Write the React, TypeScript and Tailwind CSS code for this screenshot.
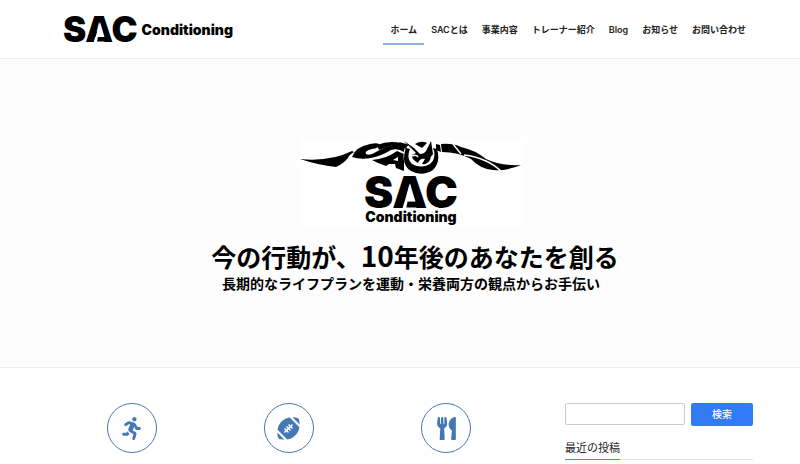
import { FaRunning, FaFootballBall, FaUtensils } from "react-icons/fa";

const links = ["ホーム", "SACとは", "事業内容", "トレーナー紹介", "Blog", "お知らせ", "お問い合わせ"];
const services = [
  { name: "トレーニング", Icon: FaRunning },
  { name: "スポーツ", Icon: FaFootballBall },
  { name: "栄養", Icon: FaUtensils },
];

function Wings() {
  return (
    <svg viewBox="300 137 222 38" className="h-[38px] w-[222px]" aria-hidden="true">
      <path d="M300 158 Q330 161 352 150 L354 151 Q349 154 348 157 Q343 163 336 166 Q318 164 300 158Z" />
      <path d="M352 156 Q355 146 370 143 Q379 141 380 144 Q379 147 372 148 Q364 150 366 153 Q370 155 376 151 Q386 145 397 143 L405 145 L404 151 Q398 147 391 149 Q381 155 371 157 Q360 159 352 156Z" />
      <path d="M377 144 Q389 139 401 142 L406 146 Q396 142 387 146 L379 149Z" />
      <path d="M372 159 Q386 158 397 150 L404 153 L404 170 L396 167 L395 163 L389 163 L386 165 L378 162Z" />
      <path d="M393 159 L398 156 L398 160Z" fill="white" />
      <path d="M399 141 L410 144 L418 152 L407 150Z" />
      <circle cx="421" cy="156" r="17.5" fill="white" />
      <path d="M406 147 Q400 163 411 170 Q422 176 433 169 Q441 161 437 148 L433 147 Q437 157 430 163 Q421 168 412 163 Q406 157 410 148Z" />
      <path d="M404 140 L414 147 L420 153 Q424 153 426 150 L431 140 L433 153 Q430 156 430 159 Q427 164 422 163 L425 158 Q420 157 418 162 Q411 158 412 154 L416 152Z" />
      <path d="M412 155 Q416 153 418 156 M421 147 Q424 144 427 144" fill="none" stroke="white" strokeWidth="1.4" />
      <path d="M415 143 Q421 139 427 142 L422 147Z" />
      <path d="M436 143 L440 144 L441 151 L436 149Z" />
      <path d="M441 143 Q453 142 461 146 Q475 149 486 158 Q500 165 521 164 Q507 170 493 169 Q480 168 471 158 Q458 151 442 151Z" />
      <path d="M453 143 L461 153 M464 154 Q475 155 486 160 Q493 163 501 170" fill="none" stroke="white" strokeWidth="1.4" />
    </svg>
  );
}

function Notch({ className }: { className: string }) {
  return (
    <svg viewBox="0 0 26 26" className={"absolute " + className} aria-hidden="true">
      <path d="M13 6 L17.5 21 L11 21 L10 26 L7 26Z" fill="white" />
      <path d="M11 21 H19 V25.5 H10Z" />
    </svg>
  );
}

export default function App() {
  return (
    <div className="min-h-screen bg-white font-['Inter','Noto_Sans_CJK_JP',sans-serif] text-[#222]">
      <header className="border-b border-[#eee] px-[47px]">
        <div className="flex h-[58px] items-center justify-between">
          <a href="#home" className="flex items-center gap-1 pl-4 text-black">
            <span className="relative text-[35px] leading-[56px] font-black">
              SAC
              <Notch className="top-[15px] left-6 size-[26px]" />
            </span>
            <span className="pt-[2px] text-[14px] leading-5 font-black">Conditioning</span>
          </a>
          <nav className="flex">
            {links.map((link, i) => (
              <a key={link} href={"#" + i} className={"px-[7px] pt-[9px] pb-[5px] text-[9px] leading-4 font-semibold whitespace-nowrap border-b-2 " + (i === 0 ? "border-[#8fb1d9]" : "border-transparent")}>
                {link}
              </a>
            ))}
          </nav>
        </div>
      </header>
      <section className="flex flex-col items-center border-b border-[#eee] bg-[#fdfdfd] pt-[79px] pb-[75px] text-black">
        <div className="ml-[22px] flex w-[222px] flex-col items-center bg-white">
          <Wings />
          <div className="relative text-[44px] leading-8 font-black">
            SAC
            <Notch className="top-0 left-[30px] size-8" />
          </div>
          <div className="text-[14px] leading-[18px] font-black">Conditioning</div>
        </div>
        <h1 className="mt-3 ml-[30px] font-['Noto_Sans_CJK_JP',sans-serif] text-[25px] leading-9 font-bold">
          今の行動が、<span className="text-[28px] leading-none">10</span>年後のあなたを創る
        </h1>
        <p className="ml-[22px] font-['Noto_Sans_CJK_JP',sans-serif] text-[14px] leading-[18px] font-bold">長期的なライフプランを運動・栄養両方の観点からお手伝い</p>
      </section>
      <main className="flex justify-between gap-10 px-[47px] pt-[35px]">
        <div className="grid flex-1 grid-cols-3 pl-[6px]">
          {services.map(({ name, Icon }) => (
            <a key={name} href="#services" aria-label={name} className="flex size-[50px] items-center justify-center justify-self-center rounded-full border border-[#4478b4] text-[#4478b4]">
              <Icon size={23} />
            </a>
          ))}
        </div>
        <aside className="w-[188px]">
          <form className="flex gap-[6px]" onSubmit={(e) => e.preventDefault()}>
            <input type="search" aria-label="検索" className="h-[22px] min-w-0 flex-1 rounded-xs border border-[#ccc] bg-white px-2 text-[10px]" />
            <button className="h-[23px] w-[62px] rounded-xs bg-[#337af7] text-[10px] font-medium text-white">検索</button>
          </form>
          <h2 className="mt-[11px] flex border-b border-[#e5e5e5] text-[11px] leading-[22px]">
            <span className="-mb-px border-b border-[#5b8acb]">最近の投稿</span>
          </h2>
        </aside>
      </main>
    </div>
  );
}
